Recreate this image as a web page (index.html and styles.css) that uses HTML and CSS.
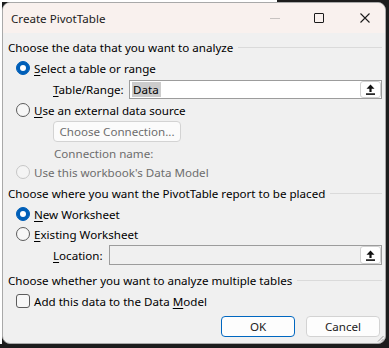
FILE: index.html
```html
<!DOCTYPE html>
<html>
<head>
    <meta charset="utf-8">
    <link rel="stylesheet" href="styles.css">
</head>
<body>
    <div class="window">
        <div class="titlebar">
            <span class="title">Create PivotTable</span>
            <span class="cap-min"></span>
            <span class="cap-max"></span>
            <svg class="cap-close" width="10" height="10" viewBox="0 0 10 10">
                <path d="M0.5 0.5 L9.5 9.5 M9.5 0.5 L0.5 9.5" stroke="#1b1b1b" stroke-width="1.1" fill="none"/>
            </svg>
        </div>

        <div class="content">
            <div class="group-head"><span>Choose the data that you want to analyze</span><i></i></div>

            <div class="row option first">
                <span class="radio checked"></span><span><u>S</u>elect a table or range</span>
            </div>

            <div class="row field-row range-row">
                <span class="field-label range-label"><u>T</u>able/Range:</span>
                <div class="field">
                    <span class="sel">Data</span>
                    <span class="ref-btn">
                        <svg width="9" height="11" viewBox="0 0 9 11"><path d="M4.5 0.5 L8.5 4.8 L5.6 4.8 L5.6 8 L3.4 8 L3.4 4.8 L0.5 4.8 Z" fill="#111"/><rect x="0" y="9.3" width="9" height="1.6" fill="#111"/></svg>
                    </span>
                </div>
            </div>

            <div class="row option ext-row">
                <span class="radio"></span><span><u>U</u>se an external data source</span>
            </div>

            <div class="conn-row">
                <span class="btn conn-btn">Choose Connection...</span>
            </div>

            <div class="row conn-name">Connection name:</div>

            <div class="row option disabled model-row">
                <span class="radio"></span><span>Use this workbook's Data Model</span>
            </div>

            <div class="group-head place-head"><span>Choose where you want the PivotTable report to be placed</span><i></i></div>

            <div class="row option new-row">
                <span class="radio checked"></span><span><u>N</u>ew Worksheet</span>
            </div>

            <div class="row option exist-row">
                <span class="radio"></span><span><u>E</u>xisting Worksheet</span>
            </div>

            <div class="row field-row loc-row">
                <span class="field-label loc-label"><u>L</u>ocation:</span>
                <div class="field off">
                    <span class="ref-btn">
                        <svg width="9" height="11" viewBox="0 0 9 11"><path d="M4.5 0.5 L8.5 4.8 L5.6 4.8 L5.6 8 L3.4 8 L3.4 4.8 L0.5 4.8 Z" fill="#111"/><rect x="0" y="9.3" width="9" height="1.6" fill="#111"/></svg>
                    </span>
                </div>
            </div>

            <div class="group-head multi-head"><span>Choose whether you want to analyze multiple tables</span><i></i></div>

            <div class="row option check-row">
                <span class="checkbox"></span><span>Add this data to the Data <u>M</u>odel</span>
            </div>

            <div class="actions">
                <span class="btn default">OK</span>
                <span class="btn">Cancel</span>
            </div>
        </div>

        <svg class="grip" width="7" height="7" viewBox="0 0 7 7">
            <path d="M6.5 1 L1 6.5 M6.5 4 L4 6.5" stroke="#9a9a9a" stroke-width="1" fill="none"/>
        </svg>
    </div>
</body>
</html>
```

FILE: styles.css
```css
html, body {
    margin: 0;
    padding: 0;
}

body {
    width: 389px;
    height: 348px;
    overflow: hidden;
    font-family: "Noto Sans", "Open Sans", sans-serif;
    font-size: 11.6px;
    color: #000;
    background:
        linear-gradient(#fff, #fff) 0 0 / 2px 344px no-repeat,
        linear-gradient(#fff, #fff) 0 0 / 277px 2px no-repeat,
        #1c1c1c;
}

.window {
    position: relative;
    box-sizing: border-box;
    margin: 2px 0 0 2px;
    width: 384px;
    height: 342px;
    background: #f0f0f0;
    border: 1px solid #a9a9a9;
    border-radius: 8px;
    overflow: hidden;
}

/* title bar */
.titlebar {
    height: 30px;
    display: flex;
    align-items: center;
    background: #f9f1ee;
}

.title {
    margin-left: 8px;
    color: #1b1b1b;
}

.cap-min {
    margin-left: auto;
    width: 10px;
    height: 1px;
    background: #c8c3c1;
}

.cap-max {
    margin-left: 34px;
    box-sizing: border-box;
    width: 10px;
    height: 10px;
    border: 1px solid #1b1b1b;
    border-radius: 1px;
}

.cap-close {
    margin-left: 36px;
    margin-right: 15px;
}

/* body */
.content {
    padding: 4px 3px 0 5px;
    display: flex;
    flex-direction: column;
}

.group-head {
    height: 20px;
    display: flex;
    align-items: center;
}

.group-head i {
    flex: 1;
    height: 1px;
    margin-left: 5px;
    background: #dadada;
}

.row {
    height: 20px;
    display: flex;
    align-items: center;
}

.option {
    padding-left: 8px;
}

.option .radio,
.option .checkbox {
    margin-right: 4px;
}

u {
    text-decoration-thickness: 1px;
    text-underline-offset: 2px;
}

.first { margin-top: 1px; }
.range-row { margin-top: 2px; height: 19px; }
.ext-row { margin-top: 1px; }
.conn-row { margin-top: 1px; padding-left: 45px; display: flex; }
.conn-name { margin-top: 2px; height: 18px; padding-left: 46px; color: #6d6d6d; }
.model-row { margin-top: 0; }
.place-head { margin-top: 1px; }
.new-row { margin-top: 1px; }
.exist-row { margin-top: 0; }
.loc-row { margin-top: 1px; }
.multi-head { margin-top: 5px; }
.check-row { margin-top: 1px; }

.disabled {
    color: #6d6d6d;
}

/* radios and checkbox */
.radio {
    box-sizing: border-box;
    width: 14px;
    height: 14px;
    border-radius: 50%;
    border: 1px solid #5c5c5c;
    background: #f7f7f7;
    display: flex;
    align-items: center;
    justify-content: center;
}

.radio.checked {
    border-color: #005fb8;
    background: #005fb8;
}

.radio.checked::after {
    content: "";
    width: 6px;
    height: 6px;
    border-radius: 50%;
    background: #fff;
}

.disabled .radio {
    border-color: #c6c6c6;
    background: #f4f4f4;
}

.checkbox {
    box-sizing: border-box;
    width: 14px;
    height: 14px;
    border-radius: 3px;
    border: 1px solid #5c5c5c;
    background: #f7f7f7;
}

/* reference fields */
.field-row {
    padding-left: 45px;
}

.range-label { width: 76px; }
.loc-label { width: 56px; }

.field {
    flex: 1;
    box-sizing: border-box;
    height: 100%;
    border: 1px solid #9c9c9c;
    background: #fff;
    display: flex;
    align-items: stretch;
    padding: 0 0 0 2px;
}

.field.off {
    background: #f0f0f0;
}

.sel {
    background: #cccccc;
    padding: 0 2px 0 1px;
    display: flex;
    align-items: center;
    margin: 1px 0;
}

.ref-btn {
    margin-left: auto;
    box-sizing: border-box;
    width: 21px;
    background: #fff;
    border: 1px solid #d0d0d0;
    border-radius: 3px;
    display: flex;
    align-items: center;
    justify-content: center;
}

.loc-row {
    height: 20px;
}

/* buttons */
.btn {
    box-sizing: border-box;
    height: 21px;
    display: flex;
    align-items: center;
    justify-content: center;
    background: #fdfdfd;
    border: 1px solid #d3d3d3;
    border-radius: 4px;
}

.conn-btn {
    width: 128px;
    color: #6d6d6d;
    background: #fbfbfb;
}

.actions {
    margin-top: 5px;
    display: flex;
    justify-content: flex-end;
    gap: 11px;
    padding-right: 2px;
}

.actions .btn {
    width: 74px;
    color: #1b1b1b;
}

.actions .default {
    border-color: #0067c0;
}

.grip {
    position: absolute;
    right: 1px;
    bottom: 1px;
}
```
